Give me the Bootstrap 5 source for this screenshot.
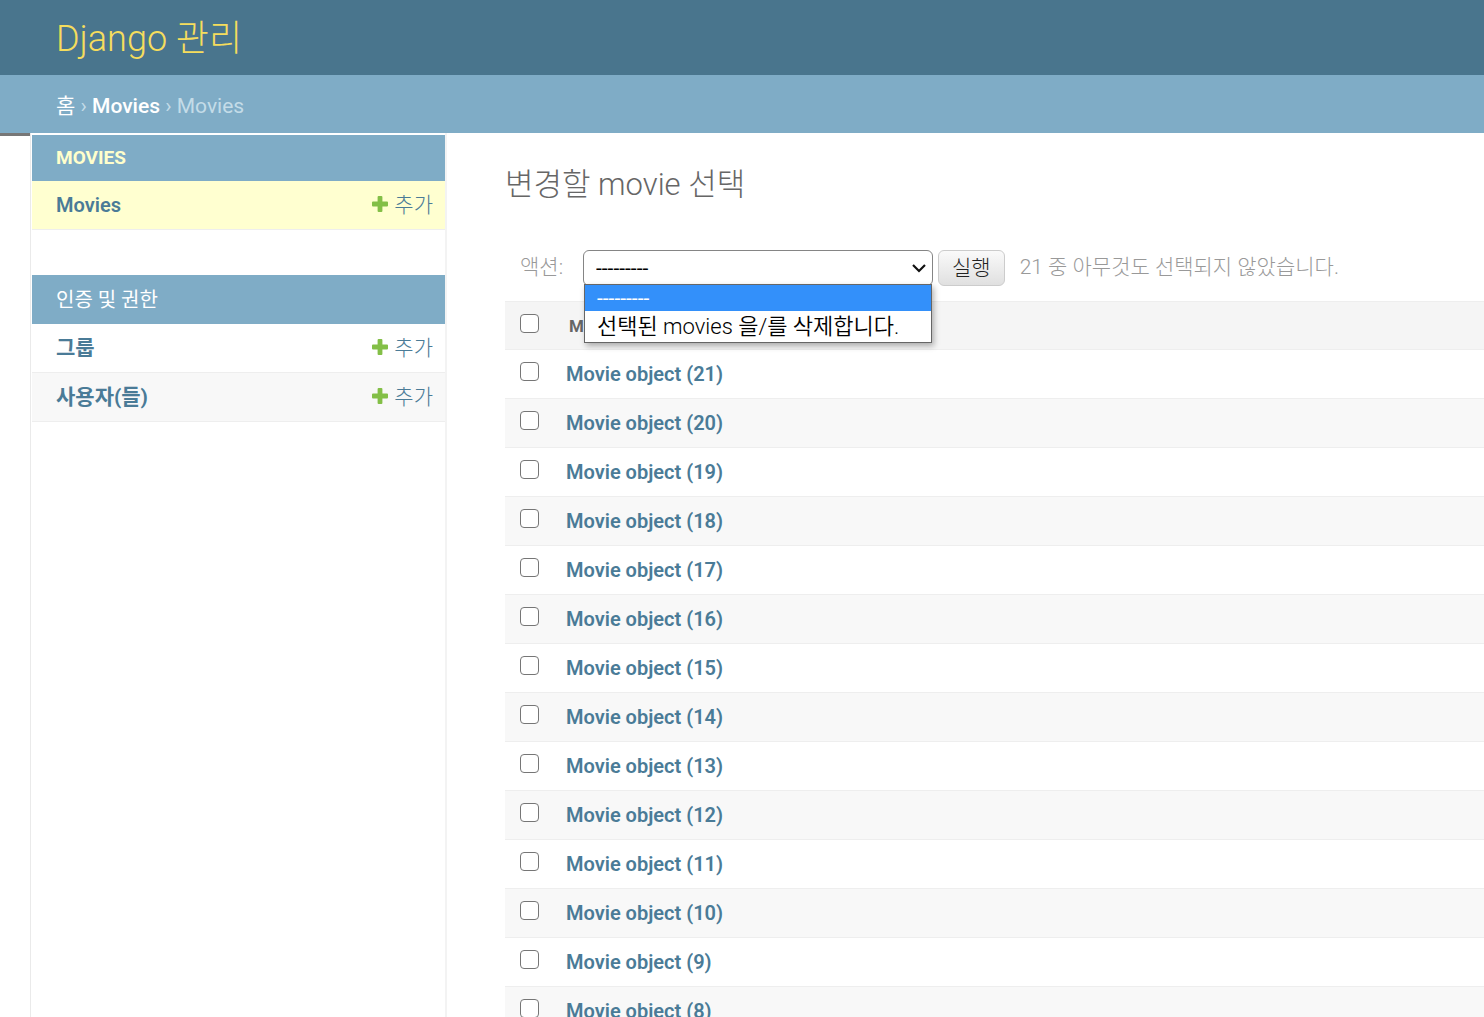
<!DOCTYPE html>
<html lang="ko">
<head>
<meta charset="utf-8">
<meta name="viewport" content="width=device-width, initial-scale=1">
<title>변경할 movie 선택 | Django 사이트 관리</title>
<link href="https://cdn.jsdelivr.net/npm/bootstrap@5.3.0/dist/css/bootstrap.min.css" rel="stylesheet">
<style>
  body { font-family: Roboto, "Noto Sans CJK KR", sans-serif; font-size: 21px; line-height: 24px; color: #333; background: #fff; }
  a { color: #4a7b97; text-decoration: none; }
  a:hover { color: #036; }
  .site-header { height: 75px; padding: 2px 56px 0; background: #49758d; }
  .site-name { font-size: 36px; line-height: 44px; font-weight: 300; }
  .site-name a { color: #f5dd5d; }
  .crumb-bar { height: 58px; padding: 4px 56px 0; background: #7facc6; color: #c4dce8; white-space: pre; }
  .crumb-bar a { color: #fff; }
  .crumb-bar .crumb-app { font-weight: 500; }
  .side-toggle { width: 30px; background: #fff; border: 0; border-top: 3px solid #777; }
  .side-nav { width: 417px; border-left: 1px solid #eaeaea; border-right: 2px solid #f3f3f3; padding: 2px 0 0 1px; }
  .app-module { margin-bottom: 45px; }
  .app-title { background: #7facc6; margin: 0; padding: 0 24px; height: 46px; font-size: 19px; font-weight: 700; color: #ffc; }
  .app-title a { color: inherit; }
  .app-title.plain-app { height: 49px; font-size: 20px; font-weight: 400; color: #fff; }
  .model-row { height: 49px; padding: 0 12px 0 24px; border-bottom: 1px solid #eee; }
  .model-row.current { background: #ffffd0; }
  .model-row.current .model-name { font-size: 20px; font-weight: 600; }
  .model-row.shaded { background: #f8f8f8; }
  .model-name { font-weight: 700; }
  .add-link { font-weight: 300; gap: 6px; }
  .add-link svg { margin-bottom: 2px; }
  .main-pane { padding: 30px 0 0 58px; }
  .page-title { font-size: 31px; line-height: 44px; font-weight: 300; color: #666; margin: 0 0 43px; }
  .action-bar { padding: 0 15px; height: 51px; color: #999; font-weight: 300; }
  .action-bar label { width: 63px; line-height: 34px; }
  .picker { width: 350px; }
  .picker .form-select { height: 36px; padding: 0 36px 0 12px; border: 1px solid #858585; border-radius: 6px; color: #000; font-size: 21px; line-height: 34px;
    background-image: url("data:image/svg+xml,%3Csvg xmlns='http://www.w3.org/2000/svg' viewBox='0 0 16 16'%3E%3Cpath fill='none' stroke='%23111' stroke-width='2.2' d='M2 5l6 6 6-6'/%3E%3C/svg%3E");
    background-position: right 5px center; background-size: 16px 16px; }
  .picker-menu { position: absolute; top: 34px; left: 1px; right: 1px; z-index: 5; margin: 0; padding: 0; list-style: none; background: #fff; color: #000; border: 1px solid #666; box-shadow: 2px 3px 6px rgba(0,0,0,.3); }
  .picker-menu li { padding: 0 12px; font-size: 22px; line-height: 31px; white-space: nowrap; font-weight: 350; }
  .picker-menu .chosen { background: #3390fa; color: #fff; font-size: 21px; line-height: 26px; font-weight: 400; }
  .run-btn { height: 36px; padding: 0 13px; margin: 0 15px 0 5px; border: 1px solid #ccc; border-radius: 6px; background: linear-gradient(#fafafa, #e0e0e0); color: #222; font-size: 21px; line-height: 30px; font-weight: 300; }
  .counter { line-height: 34px; }
  .result-list { margin: 0; border-top: 1px solid #eee; color: #666; }
  .result-list th, .result-list td { height: 49px; padding: 0; border-bottom: 1px solid #eee; text-align: left; vertical-align: middle; }
  .result-list thead th { height: 48px; background: #f5f5f5; font-size: 17px; font-weight: 700; color: #666; }
  .result-list thead .name-col { padding-left: 3px; }
  .result-list tbody tr:nth-child(even) { background: #f8f8f8; }
  .result-list tbody a { font-weight: 600; font-size: 20px; }
  .result-list .pick-col { width: 61px; padding: 0 0 5px 15px; }
  .result-list .form-check-input { display: block; width: 19px; height: 19px; margin: 0; border: 1px solid #767676; border-radius: 4px; }
</style>
<script src="https://cdn.jsdelivr.net/npm/bootstrap@5.3.0/dist/js/bootstrap.bundle.min.js"></script>
</head>
<body>
<svg width="0" height="0" class="d-none" aria-hidden="true">
  <symbol id="plus-icon" viewBox="0 0 16 16"><path fill="#83bf47" d="M6.600 0h2.800q1 0 1 1v4.600H15q1 0 1 1v2.800q0 1-1 1h-4.600V15q0 1-1 1H6.600q-1 0-1-1v-4.600H1q-1 0-1-1V6.600q0-1 1-1h4.600V1q0-1 1-1z"/></symbol>
</svg>
<div class="vh-100 d-flex flex-column overflow-hidden">
  <header class="site-header d-flex align-items-center flex-shrink-0">
    <h1 class="site-name m-0"><a href="#">Django 관리</a></h1>
  </header>
  <nav class="crumb-bar d-flex align-items-center flex-shrink-0" aria-label="breadcrumb"><a class="crumb-home" href="#">홈</a> › <a class="crumb-app" href="#">Movies</a> › Movies</nav>
  <div class="d-flex flex-grow-1 overflow-hidden">
    <button class="side-toggle flex-shrink-0 align-self-start p-0" type="button" aria-label="탐색 전환"></button>
    <nav class="side-nav flex-shrink-0" aria-label="앱">
      <section class="app-module">
        <h2 class="app-title d-flex align-items-center"><a href="#">MOVIES</a></h2>
        <div class="model-row current d-flex align-items-center justify-content-between">
          <a class="model-name" href="#">Movies</a>
          <a class="add-link d-flex align-items-center" href="#"><svg width="16" height="16" aria-hidden="true"><use href="#plus-icon"/></svg>추가</a>
        </div>
      </section>
      <section class="app-module">
        <h2 class="app-title plain-app d-flex align-items-center"><a href="#">인증 및 권한</a></h2>
        <div class="model-row d-flex align-items-center justify-content-between">
          <a class="model-name" href="#">그룹</a>
          <a class="add-link d-flex align-items-center" href="#"><svg width="16" height="16" aria-hidden="true"><use href="#plus-icon"/></svg>추가</a>
        </div>
        <div class="model-row shaded d-flex align-items-center justify-content-between">
          <a class="model-name" href="#">사용자(들)</a>
          <a class="add-link d-flex align-items-center" href="#"><svg width="16" height="16" aria-hidden="true"><use href="#plus-icon"/></svg>추가</a>
        </div>
      </section>
    </nav>
    <main class="main-pane flex-grow-1">
      <h2 class="page-title">변경할 movie 선택</h2>
      <form>
        <div class="action-bar d-flex align-items-start">
          <label for="action">액션:</label>
          <div class="picker position-relative">
            <select class="form-select" id="action"><option>---------</option></select>
            <ul class="picker-menu" role="listbox" aria-label="액션">
              <li class="chosen" role="option" aria-selected="true">---------</li>
              <li role="option" aria-selected="false">선택된 movies 을/를 삭제합니다.</li>
            </ul>
          </div>
          <button class="run-btn" type="button">실행</button>
          <span class="counter">21 중 아무것도 선택되지 않았습니다.</span>
        </div>
        <table class="result-list w-100">
          <thead><tr><th class="pick-col"><input class="form-check-input" type="checkbox" aria-label="모두 선택"></th><th class="name-col">MOVIE</th></tr></thead>
          <tbody>
            <tr><td class="pick-col"><input class="form-check-input" type="checkbox" aria-label="21"></td><td><a href="#">Movie object (21)</a></td></tr>
            <tr><td class="pick-col"><input class="form-check-input" type="checkbox" aria-label="20"></td><td><a href="#">Movie object (20)</a></td></tr>
            <tr><td class="pick-col"><input class="form-check-input" type="checkbox" aria-label="19"></td><td><a href="#">Movie object (19)</a></td></tr>
            <tr><td class="pick-col"><input class="form-check-input" type="checkbox" aria-label="18"></td><td><a href="#">Movie object (18)</a></td></tr>
            <tr><td class="pick-col"><input class="form-check-input" type="checkbox" aria-label="17"></td><td><a href="#">Movie object (17)</a></td></tr>
            <tr><td class="pick-col"><input class="form-check-input" type="checkbox" aria-label="16"></td><td><a href="#">Movie object (16)</a></td></tr>
            <tr><td class="pick-col"><input class="form-check-input" type="checkbox" aria-label="15"></td><td><a href="#">Movie object (15)</a></td></tr>
            <tr><td class="pick-col"><input class="form-check-input" type="checkbox" aria-label="14"></td><td><a href="#">Movie object (14)</a></td></tr>
            <tr><td class="pick-col"><input class="form-check-input" type="checkbox" aria-label="13"></td><td><a href="#">Movie object (13)</a></td></tr>
            <tr><td class="pick-col"><input class="form-check-input" type="checkbox" aria-label="12"></td><td><a href="#">Movie object (12)</a></td></tr>
            <tr><td class="pick-col"><input class="form-check-input" type="checkbox" aria-label="11"></td><td><a href="#">Movie object (11)</a></td></tr>
            <tr><td class="pick-col"><input class="form-check-input" type="checkbox" aria-label="10"></td><td><a href="#">Movie object (10)</a></td></tr>
            <tr><td class="pick-col"><input class="form-check-input" type="checkbox" aria-label="9"></td><td><a href="#">Movie object (9)</a></td></tr>
            <tr><td class="pick-col"><input class="form-check-input" type="checkbox" aria-label="8"></td><td><a href="#">Movie object (8)</a></td></tr>
          </tbody>
        </table>
      </form>
    </main>
  </div>
</div>
</body>
</html>
